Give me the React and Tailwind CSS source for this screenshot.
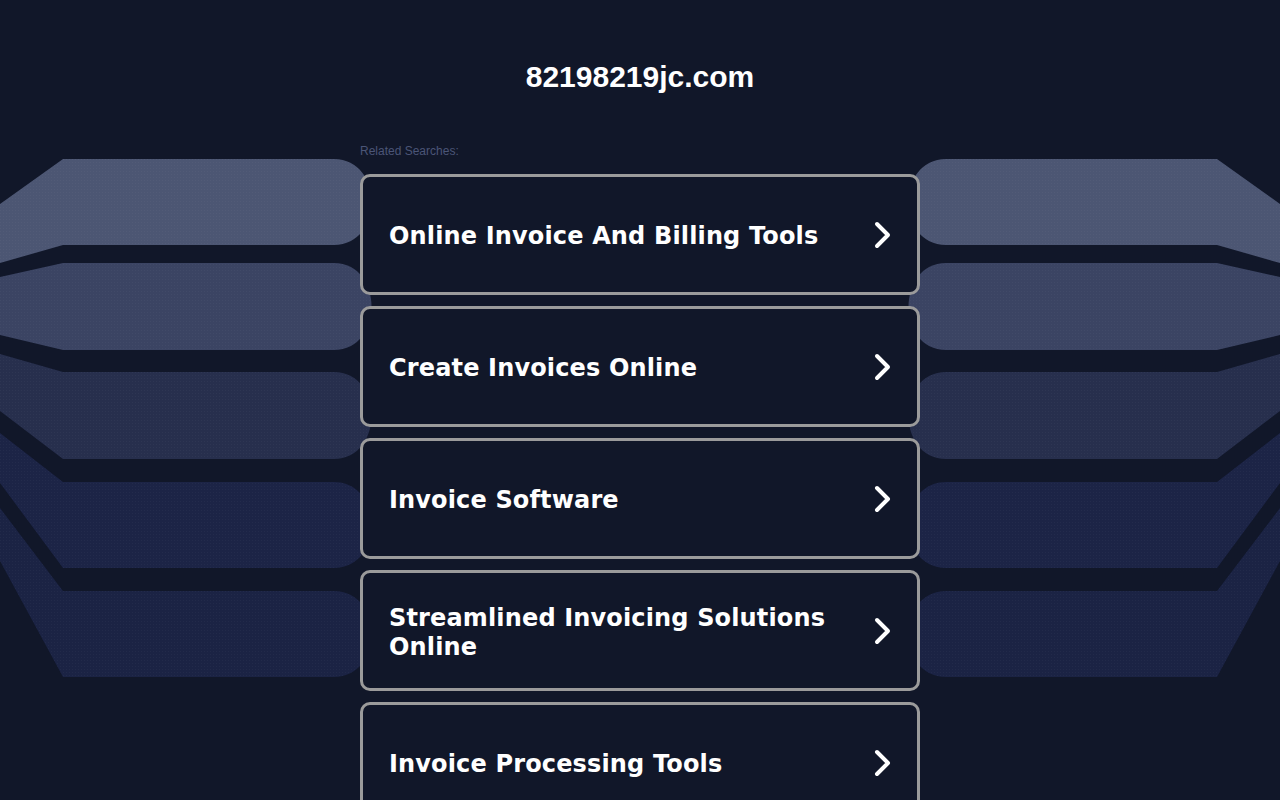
import React from "react";

const searches = [
  "Online Invoice And Billing Tools",
  "Create Invoices Online",
  "Invoice Software",
  "Streamlined Invoicing Solutions Online",
  "Invoice Processing Tools",
];

// bands behind the list: top, bottom, left edge top/bottom at x=0, fill
const bands = [
  { t: 159, b: 245, a: 204, z: 263, fill: "#4c5673" },
  { t: 263, b: 350, a: 277, z: 335, fill: "#3b4463" },
  { t: 372, b: 459, a: 354, z: 411, fill: "#272f4d" },
  { t: 482, b: 568, a: 433, z: 483, fill: "#1c2446" },
  { t: 591, b: 677, a: 508, z: 561, fill: "#1b2344" },
];

function bandPath({ t, b, a, z }) {
  return `M63 ${t} H334 C384 ${t} 384 ${b} 334 ${b} H63 L0 ${z} V${a} Z`;
}

function Backdrop() {
  return (
    <svg className="absolute inset-0 w-[1280px] h-[800px]" viewBox="0 0 1280 800">
      <defs>
        <pattern id="dots" width="3" height="3" patternUnits="userSpaceOnUse">
          <rect width="1" height="1" fill="#ffffff" fillOpacity="0.03" />
        </pattern>
      </defs>
      {[0, 1].map((side) => (
        <g key={side} transform={side ? "matrix(-1 0 0 1 1280 0)" : undefined}>
          {bands.map((band, i) => (
            <g key={i}>
              <path d={bandPath(band)} fill={band.fill} />
              <path d={bandPath(band)} fill="url(#dots)" />
            </g>
          ))}
        </g>
      ))}
    </svg>
  );
}

function Chevron() {
  return (
    <svg width="20" height="30" viewBox="0 0 20 30" className="shrink-0">
      <path d="M4 4 L15 15 L4 26" fill="none" stroke="#ffffff" strokeWidth="4" strokeLinecap="round" strokeLinejoin="round" />
    </svg>
  );
}

export default function App() {
  return (
    <div className="relative min-h-screen overflow-hidden bg-[#111729]">
      <Backdrop />
      <div className="relative mx-auto w-[560px] pt-[59px]">
        <h1 className="text-center text-[30px] leading-9 font-bold text-white font-['Liberation_Sans',Arial,sans-serif]">
          82198219jc.com
        </h1>
        <div className="mt-[48px] text-[12px] leading-4 text-[#4b5577] font-['Liberation_Sans',Arial,sans-serif]">
          Related Searches:
        </div>
        <div className="mt-[15px] flex flex-col gap-[11px]">
          {searches.map((s) => (
            <a
              key={s}
              href="#"
              className="flex h-[121px] items-center justify-between gap-4 rounded-[10px] border-[3px] border-[#9b9b9b] bg-[#111729] pl-[26px] pr-[24px]"
            >
              <span className="mt-[4px] text-[24px] leading-[29px] font-bold tracking-[0.15px] text-white font-['DejaVu_Sans',Verdana,sans-serif]">
                {s}
              </span>
              <Chevron />
            </a>
          ))}
        </div>
      </div>
    </div>
  );
}
